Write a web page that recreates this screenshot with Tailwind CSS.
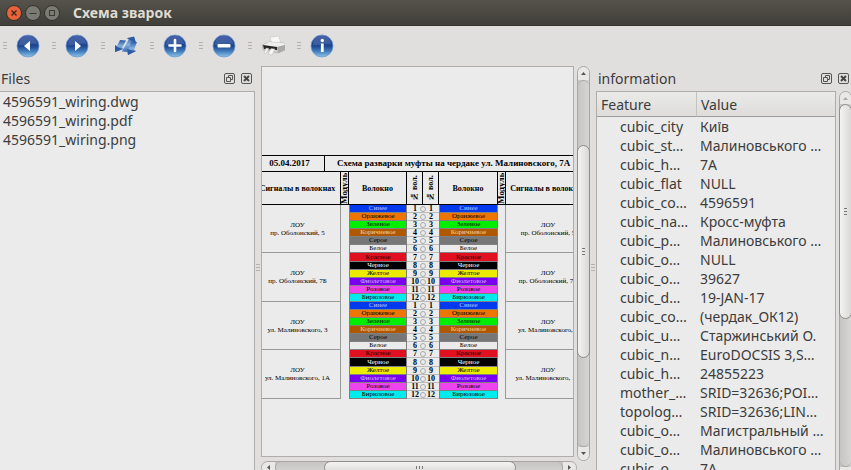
<!DOCTYPE html>
<html lang="uk">
<head>
<meta charset="utf-8">
<title>Схема зварок</title>
<script src="https://cdn.jsdelivr.net/npm/@tailwindcss/browser@4"></script>
</head>
<body class="h-screen overflow-hidden bg-[#e0dfde] font-['Noto_Sans','Open_Sans',sans-serif] text-[14px] leading-[19px] text-[#3c3c3c]">
<svg class="absolute size-0" aria-hidden="true">
  <defs>
    <linearGradient id="orb" x1="0" y1="0" x2="0" y2="1">
      <stop offset="0" stop-color="#2b4a9c"/><stop offset=".5" stop-color="#1d4690"/><stop offset=".75" stop-color="#4580bd"/><stop offset="1" stop-color="#8cc4ea"/>
    </linearGradient>
    <linearGradient id="arrow" x1="0" y1="0" x2="0" y2="1">
      <stop offset="0" stop-color="#2a5aa6"/><stop offset=".5" stop-color="#86b0de"/><stop offset="1" stop-color="#3a6ab2"/>
    </linearGradient>
    <symbol id="disc" viewBox="0 0 24 24">
      <circle cx="12" cy="12" r="11" fill="url(#orb)" stroke="#6c9acb" stroke-width=".8"/>
      <path d="M3 11a9 9 0 0 1 15-7c2 2 3 4 3 6-6-2-11 2-18 1z" fill="#fff" opacity=".13"/>
    </symbol>
    <symbol id="float" viewBox="0 0 11 11">
      <rect x=".5" y=".5" width="10" height="10" rx="1.5" fill="none" stroke="#555"/>
      <path d="M4.5 4.500V2.500H8.500V6.500H6.500M2.500 4.500H6.500V8.500H2.500Z" fill="none" stroke="#555"/>
    </symbol>
    <symbol id="close" viewBox="0 0 11 11">
      <rect x=".5" y=".5" width="10" height="10" rx="1.5" fill="none" stroke="#555"/>
      <path d="M3 3L8 8M8 3L3 8" stroke="#444" stroke-width="2"/>
    </symbol>
    <symbol id="vgrip" viewBox="0 0 4 8"><path d="M0 .5H4M0 3.500H4M0 6.500H4" stroke="#b4b2b0"/></symbol>
  </defs>
</svg>
<div class="flex h-full flex-col">
  <header class="flex h-[26px] shrink-0 items-center gap-[3px] border-b border-[#353430] bg-linear-to-b from-[#55534b] to-[#3f3e39] pl-[6px]">
    <button aria-label="Закрити" class="size-4"><svg viewBox="0 0 16 16"><circle cx="8" cy="8" r="7.500" fill="#e9623a" stroke="#33322d"/><path d="M5.500 5.500l5 5M10.500 5.500l-5 5" stroke="#3b2a22" stroke-width="1.400"/></svg></button>
    <button aria-label="Згорнути" class="size-4"><svg viewBox="0 0 16 16"><circle cx="8" cy="8" r="7.500" fill="#7b7a73" stroke="#33322d"/><path d="M4.500 8.500h7" stroke="#3b3a35"/></svg></button>
    <button aria-label="Розгорнути" class="size-4"><svg viewBox="0 0 16 16"><circle cx="8" cy="8" r="7.500" fill="#7b7a73" stroke="#33322d"/><rect x="5.500" y="5.500" width="5" height="5" fill="none" stroke="#3b3a35"/></svg></button>
    <h1 class="ml-[10px] text-[14px] font-bold text-[#dfdbd2]">Схема зварок</h1>
  </header>

  <nav class="flex h-10 shrink-0 items-center pl-[3px]">
    <div class="flex w-[49px] items-center"><svg class="h-2 w-1"><use href="#vgrip"/></svg>
      <button aria-label="Назад" class="flex w-[42px] justify-center"><svg class="size-6" viewBox="0 0 24 24"><use href="#disc"/><path d="M8 12l6-5v10z" fill="#fff"/></svg></button></div>
    <div class="flex w-[49px] items-center"><svg class="h-2 w-1"><use href="#vgrip"/></svg>
      <button aria-label="Вперед" class="flex w-[42px] justify-center"><svg class="size-6" viewBox="0 0 24 24"><use href="#disc"/><path d="M16 12l-6-5v10z" fill="#fff"/></svg></button></div>
    <div class="flex w-[49px] items-center"><svg class="h-2 w-1"><use href="#vgrip"/></svg>
      <button aria-label="Оновити" class="flex w-[42px] justify-center"><svg class="size-6" viewBox="0 0 24 24">
        <path d="M6 6L12 6.500L8 14L10 15L1 18L1 11L3 12Z" fill="url(#arrow)"/>
        <path d="M15 5L13 4L20 3L22 9L20 8L14 18L8 17.500Z" fill="url(#arrow)"/>
        <path d="M17 7.500L23 8L20 16L22 17L14 21L13 14L15 15Z" fill="url(#arrow)"/>
        <path d="M13 4.500L20 2.500L22 9L20 8L15 5.500ZM1 11L3.500 13L8.500 15L1 18ZM13 14.500L16 16L22 17L14 21Z" fill="#2c5ba6"/></svg></button></div>
    <div class="flex w-[49px] items-center"><svg class="h-2 w-1"><use href="#vgrip"/></svg>
      <button aria-label="Збільшити" class="flex w-[42px] justify-center"><svg class="size-6" viewBox="0 0 24 24"><use href="#disc"/><path d="M12 6v11M6.500 11.500h11" stroke="#fff" stroke-width="2.600" stroke-linecap="round"/></svg></button></div>
    <div class="flex w-[49px] items-center"><svg class="h-2 w-1"><use href="#vgrip"/></svg>
      <button aria-label="Зменшити" class="flex w-[42px] justify-center"><svg class="size-6" viewBox="0 0 24 24"><use href="#disc"/><rect x="5.500" y="10" width="13" height="3.600" rx="1" fill="#fff"/></svg></button></div>
    <div class="flex w-[49px] items-center"><svg class="h-2 w-1"><use href="#vgrip"/></svg>
      <button aria-label="Друк" class="flex w-[42px] justify-center"><svg class="size-6" viewBox="0 0 24 24">
        <path d="M9 3l9-1 2 8-9 1z" fill="#f7f7f7" stroke="#c2c2c2" stroke-width=".6"/>
        <path d="M1 11l7-3 15 1 1 2v5l-7 3-15-3z" fill="#cfcfcd" stroke="#a5a5a3" stroke-width=".6"/>
        <path d="M8 8l15 1 1 2-8 2-14-2z" fill="#efefee"/>
        <path d="M2 11l14 2v3l-13-1z" fill="#262626"/>
        <path d="M5 14l3 .5-3 5-2-.5zM10 14.500l4 .5-3 6-4-1z" fill="#f6f6f6" stroke="#aaa" stroke-width=".4"/>
        <path d="M16 13l8-2v5l-7 3z" fill="#a9a9a7"/></svg></button></div>
    <div class="flex w-[49px] items-center"><svg class="h-2 w-1"><use href="#vgrip"/></svg>
      <button aria-label="Інформація" class="flex w-[42px] justify-center"><svg class="size-6" viewBox="0 0 24 24"><use href="#disc"/><circle cx="12.300" cy="6.500" r="1.700" fill="#fff"/><path d="M12.300 9.500v8.500" stroke="#fff" stroke-width="2.800"/></svg></button></div>
  </nav>

  <main class="flex min-h-0 flex-1">
    <section class="flex w-[255px] shrink-0 flex-col">
      <div class="flex h-[25px] shrink-0 items-center gap-[6px] pr-[3px] pl-px">
        <h2 class="flex-1">Files</h2>
        <button aria-label="Відкріпити панель"><svg class="size-[11px]"><use href="#float"/></svg></button>
        <button aria-label="Закрити панель"><svg class="size-[11px]"><use href="#close"/></svg></button>
      </div>
      <ul class="flex-1 border-t border-r border-[#b0acaa] bg-[#ebebeb] pl-[3px]">
        <li>4596591_wiring.dwg</li>
        <li>4596591_wiring.pdf</li>
        <li>4596591_wiring.png</li>
      </ul>
    </section>

    <div class="flex w-[6px] shrink-0 items-center justify-center"><svg class="h-2 w-1"><use href="#vgrip"/></svg></div>

    <section class="flex min-w-0 flex-1 flex-col">
      <div class="flex h-[395px] min-h-0 shrink-0 gap-[3px]">
        <div class="mb-1 min-w-0 flex-1 overflow-hidden border border-[#b0acaa] bg-[#ebebeb] pt-[88px] font-['Liberation_Serif',serif] text-black">
          <div class="-ml-[7px] flex h-4 w-[335px] items-stretch border-t border-black text-[9px] leading-[15px] font-bold whitespace-nowrap">
            <div class="w-[70px] shrink-0 border-r border-black text-center">05.04.2017</div>
            <div class="pl-3">Схема разварки муфты на чердаке ул. Малиновского, 7А</div>
          </div>
          <table class="-ml-[7px] h-[228px] w-[335px] table-fixed border-separate border-spacing-0 text-center text-[7px] leading-[7px] whitespace-nowrap">
            <colgroup><col class="w-[86px]"><col class="w-2"><col class="w-[58px]"><col class="w-4"><col class="w-4"><col class="w-[59px]"><col class="w-2"><col class="w-[84px]"></colgroup>
            <thead class="text-[8px]">
              <tr class="h-[34px]">
                <th class="border-y border-r border-black p-0">Сигналы в волокнах</th>
                <th class="border-y border-r border-black p-0"><div class="flex h-8 w-[7px] rotate-180 items-center justify-center text-[9px] leading-[7px] [writing-mode:vertical-rl]">Модуль</div></th>
                <th class="border-y border-r border-black p-0">Волокно</th>
                <th class="border-y border-r border-black p-0"><div class="flex h-8 w-[15px] rotate-180 items-center justify-center leading-[15px] [writing-mode:vertical-rl]">№ вол.</div></th>
                <th class="border-y border-r border-black p-0"><div class="flex h-8 w-[15px] rotate-180 items-center justify-center leading-[15px] [writing-mode:vertical-rl]">№ вол.</div></th>
                <th class="border-y border-r border-black p-0">Волокно</th>
                <th class="border-y border-r border-black p-0"><div class="flex h-8 w-[7px] rotate-180 items-center justify-center text-[9px] leading-[7px] [writing-mode:vertical-rl]">Модуль</div></th>
                <th class="border-y border-black p-0">Сигналы в волокнах</th>
              </tr>
            </thead>
            <tbody id="fibers"></tbody>
          </table>
        </div>
        <div class="flex w-[13px] shrink-0 flex-col items-center rounded-full border border-[#a9a6a3] bg-linear-to-r from-[#c6c5c3] to-[#d6d5d3]" role="scrollbar" aria-controls="fibers" aria-orientation="vertical" aria-valuenow="40">
          <div class="flex h-[13px] w-full items-center justify-center rounded-t-full bg-[#e9e8e7]"><svg class="h-[3px] w-[5px]" viewBox="0 0 5 3"><path d="M0 3L2.500 0L5 3z" fill="#555"/></svg></div>
          <div class="h-[65px] w-full rounded-t-full border-t border-[#a9a6a3]"></div>
          <div class="-mx-px flex h-[213px] w-[13px] shrink-0 items-center justify-center rounded-full border border-[#8f8c89] bg-linear-to-r from-[#f3f3f2] to-[#dad9d7]"><svg class="h-2 w-[3px]" viewBox="0 0 3 8"><path d="M0 .5H3M0 3.500H3M0 6.500H3" stroke="#777"/></svg></div>
          <div class="w-full flex-1 rounded-b-full border-b border-[#a9a6a3]"></div>
          <div class="flex h-[13px] w-full items-center justify-center rounded-b-full bg-[#e9e8e7]"><svg class="h-[3px] w-[5px]" viewBox="0 0 5 3"><path d="M0 0L2.500 3L5 0z" fill="#555"/></svg></div>
        </div>
      </div>
      <div class="mr-[13px] flex h-[13px] shrink-0 rounded-full border border-[#a9a6a3] bg-linear-to-b from-[#c6c5c3] to-[#d6d5d3]" role="scrollbar" aria-controls="fibers" aria-orientation="horizontal" aria-valuenow="45">
        <div class="flex w-[13px] items-center justify-center rounded-l-full bg-[#e9e8e7]"><svg class="h-[5px] w-[3px]" viewBox="0 0 3 5"><path d="M3 0L0 2.500L3 5z" fill="#555"/></svg></div>
        <div class="w-[49px] rounded-l-full border-l border-[#a9a6a3]"></div>
        <div class="-my-px flex w-[192px] items-center justify-center rounded-full border border-[#8f8c89] bg-linear-to-b from-[#f3f3f2] to-[#dad9d7]"><svg class="h-[3px] w-2" viewBox="0 0 8 3"><path d="M.5 0V3M3.500 0V3M6.500 0V3" stroke="#777"/></svg></div>
        <div class="flex-1 rounded-r-full border-r border-[#a9a6a3]"></div>
        <div class="flex w-[13px] items-center justify-center rounded-r-full bg-[#e9e8e7]"><svg class="h-[5px] w-[3px]" viewBox="0 0 3 5"><path d="M0 0L3 2.500L0 5z" fill="#555"/></svg></div>
      </div>
    </section>

    <div class="flex w-[6px] shrink-0 items-center justify-center"><svg class="h-2 w-1"><use href="#vgrip"/></svg></div>

    <section class="flex w-[255px] shrink-0 flex-col">
      <div class="flex h-[25px] shrink-0 items-center gap-[6px] pr-[2px] pl-[2px]">
        <h2 class="flex-1">information</h2>
        <button aria-label="Відкріпити панель"><svg class="size-[11px]"><use href="#float"/></svg></button>
        <button aria-label="Закрити панель"><svg class="size-[11px]"><use href="#close"/></svg></button>
      </div>
      <div class="flex min-h-0 flex-1 gap-[3px] overflow-hidden">
        <div class="min-w-0 flex-1 overflow-hidden border border-b-0 border-[#b0acaa] bg-[#ebebeb]">
          <table class="w-full table-fixed border-separate border-spacing-0 text-left whitespace-nowrap">
            <colgroup><col class="w-[100px]"><col></colgroup>
            <thead>
              <tr class="h-[25px] bg-linear-to-b from-[#eaeae9] to-[#dddcdb]">
                <th class="border-r border-b border-r-[#c4c2c0] border-b-[#9f9c99] p-0 pl-1 font-normal">Feature</th>
                <th class="border-b border-[#9f9c99] p-0 pl-1 font-normal">Value</th>
              </tr>
            </thead>
            <tbody id="features"></tbody>
          </table>
        </div>
        <div class="-mr-px flex h-[389px] w-[13px] shrink-0 flex-col items-center rounded-full border border-[#a9a6a3] bg-linear-to-r from-[#c6c5c3] to-[#d6d5d3]" role="scrollbar" aria-controls="features" aria-orientation="vertical" aria-valuenow="0">
          <div class="flex h-[12px] w-full items-center justify-center rounded-t-full bg-[#e9e8e7]"><svg class="h-[3px] w-[5px]" viewBox="0 0 5 3"><path d="M0 3L2.500 0L5 3z" fill="#aaa"/></svg></div>
          <div class="-mx-px flex h-[215px] w-[13px] shrink-0 items-center justify-center rounded-full border border-[#8f8c89] bg-linear-to-r from-[#f3f3f2] to-[#dad9d7]"><svg class="h-2 w-[3px]" viewBox="0 0 3 8"><path d="M0 .5H3M0 3.500H3M0 6.500H3" stroke="#777"/></svg></div>
          <div class="w-full flex-1 rounded-b-full border-b border-[#a9a6a3]"></div>
          <div class="flex h-[12px] w-full items-center justify-center rounded-b-full bg-[#e9e8e7]"><svg class="h-[3px] w-[5px]" viewBox="0 0 5 3"><path d="M0 0L2.500 3L5 0z" fill="#555"/></svg></div>
        </div>
      </div>
    </section>
  </main>
</div>
<script>
const colors = [
  ['Синее', 'bg-[#0039ee] text-[#b8c8ff]'], ['Оранжевое', 'bg-[#ee7600]'], ['Зеленое', 'bg-[#00ee00]'],
  ['Коричневое', 'bg-[#b05800] text-[#f0d0a8]'], ['Серое', 'bg-[#777777]'], ['Белое', 'bg-[#ebebeb]'],
  ['Красное', 'bg-[#e01020]'], ['Черное', 'bg-black text-white'], ['Желтое', 'bg-[#ecec00]'],
  ['Фиолетовое', 'bg-[#7800ee] text-[#dcb8ff]'], ['Розовое', 'bg-[#ee44ee]'], ['Бирюзовое', 'bg-[#00ecec]'],
];
const places = ['пр. Оболонский, 5', 'пр. Оболонский, 7Б', 'ул. Малиновского, 3', 'ул. Малиновского, 1А'];
let html = '';
for (let i = 0; i < 24; i++) {
  const [name, style] = colors[i % 12];
  const n = i % 12 + 1;
  const first = i % 6 === 0;
  const place = `ЛОУ<br>${places[Math.floor(i / 6)]}`;
  const fiber = `<td class="border-x border-b border-[#808080] p-0 ${style}">${name}</td>`;
  html += '<tr>'
    + (first ? `<td rowspan="6" class="border-r border-b border-[#999] p-0 leading-2">${place}</td>` : '')
    + (i === 0 ? '<td rowspan="24" class="p-0"></td>' : '')
    + fiber
    + `<td class="relative border-b border-[#bbb] p-0 text-[8px] leading-[7px] font-bold">${n}<span class="absolute top-px -right-[3px] size-[6px] rounded-full border border-[#aaa] bg-[#ebebeb]"></span></td>`
    + `<td class="border-b border-[#bbb] p-0 text-[8px] leading-[7px] font-bold">${n}</td>`
    + fiber
    + (i === 0 ? '<td rowspan="24" class="border-r border-[#999] p-0"></td>' : '')
    + (first ? `<td rowspan="6" class="border-b border-[#999] p-0 leading-2">${place}</td>` : '')
    + '</tr>';
}
document.getElementById('fibers').innerHTML = html;

const features = [
  ['cubic_city', 'Київ'], ['cubic_st…', 'Малиновського …'], ['cubic_h…', '7А'], ['cubic_flat', 'NULL'],
  ['cubic_co…', '4596591'], ['cubic_na…', 'Кросс-муфта'], ['cubic_p…', 'Малиновського …'], ['cubic_o…', 'NULL'],
  ['cubic_o…', '39627'], ['cubic_d…', '19-JAN-17'], ['cubic_co…', '(чердак_ОК12)'], ['cubic_u…', 'Старжинський О.'],
  ['cubic_n…', 'EuroDOCSIS 3,S…'], ['cubic_h…', '24855223'], ['mother_…', 'SRID=32636;POI…'],
  ['topolog…', 'SRID=32636;LIN…'], ['cubic_o…', 'Магистральный …'], ['cubic_o…', 'Малиновського …'], ['cubic_o…', '7А'],
];
document.getElementById('features').innerHTML = features.map(([k, v]) =>
  `<tr class="h-[19px]"><td class="p-0 pl-[23px]">${k}</td><td class="p-0 pl-[3px]">${v}</td></tr>`).join('');
</script>
</body>
</html>
